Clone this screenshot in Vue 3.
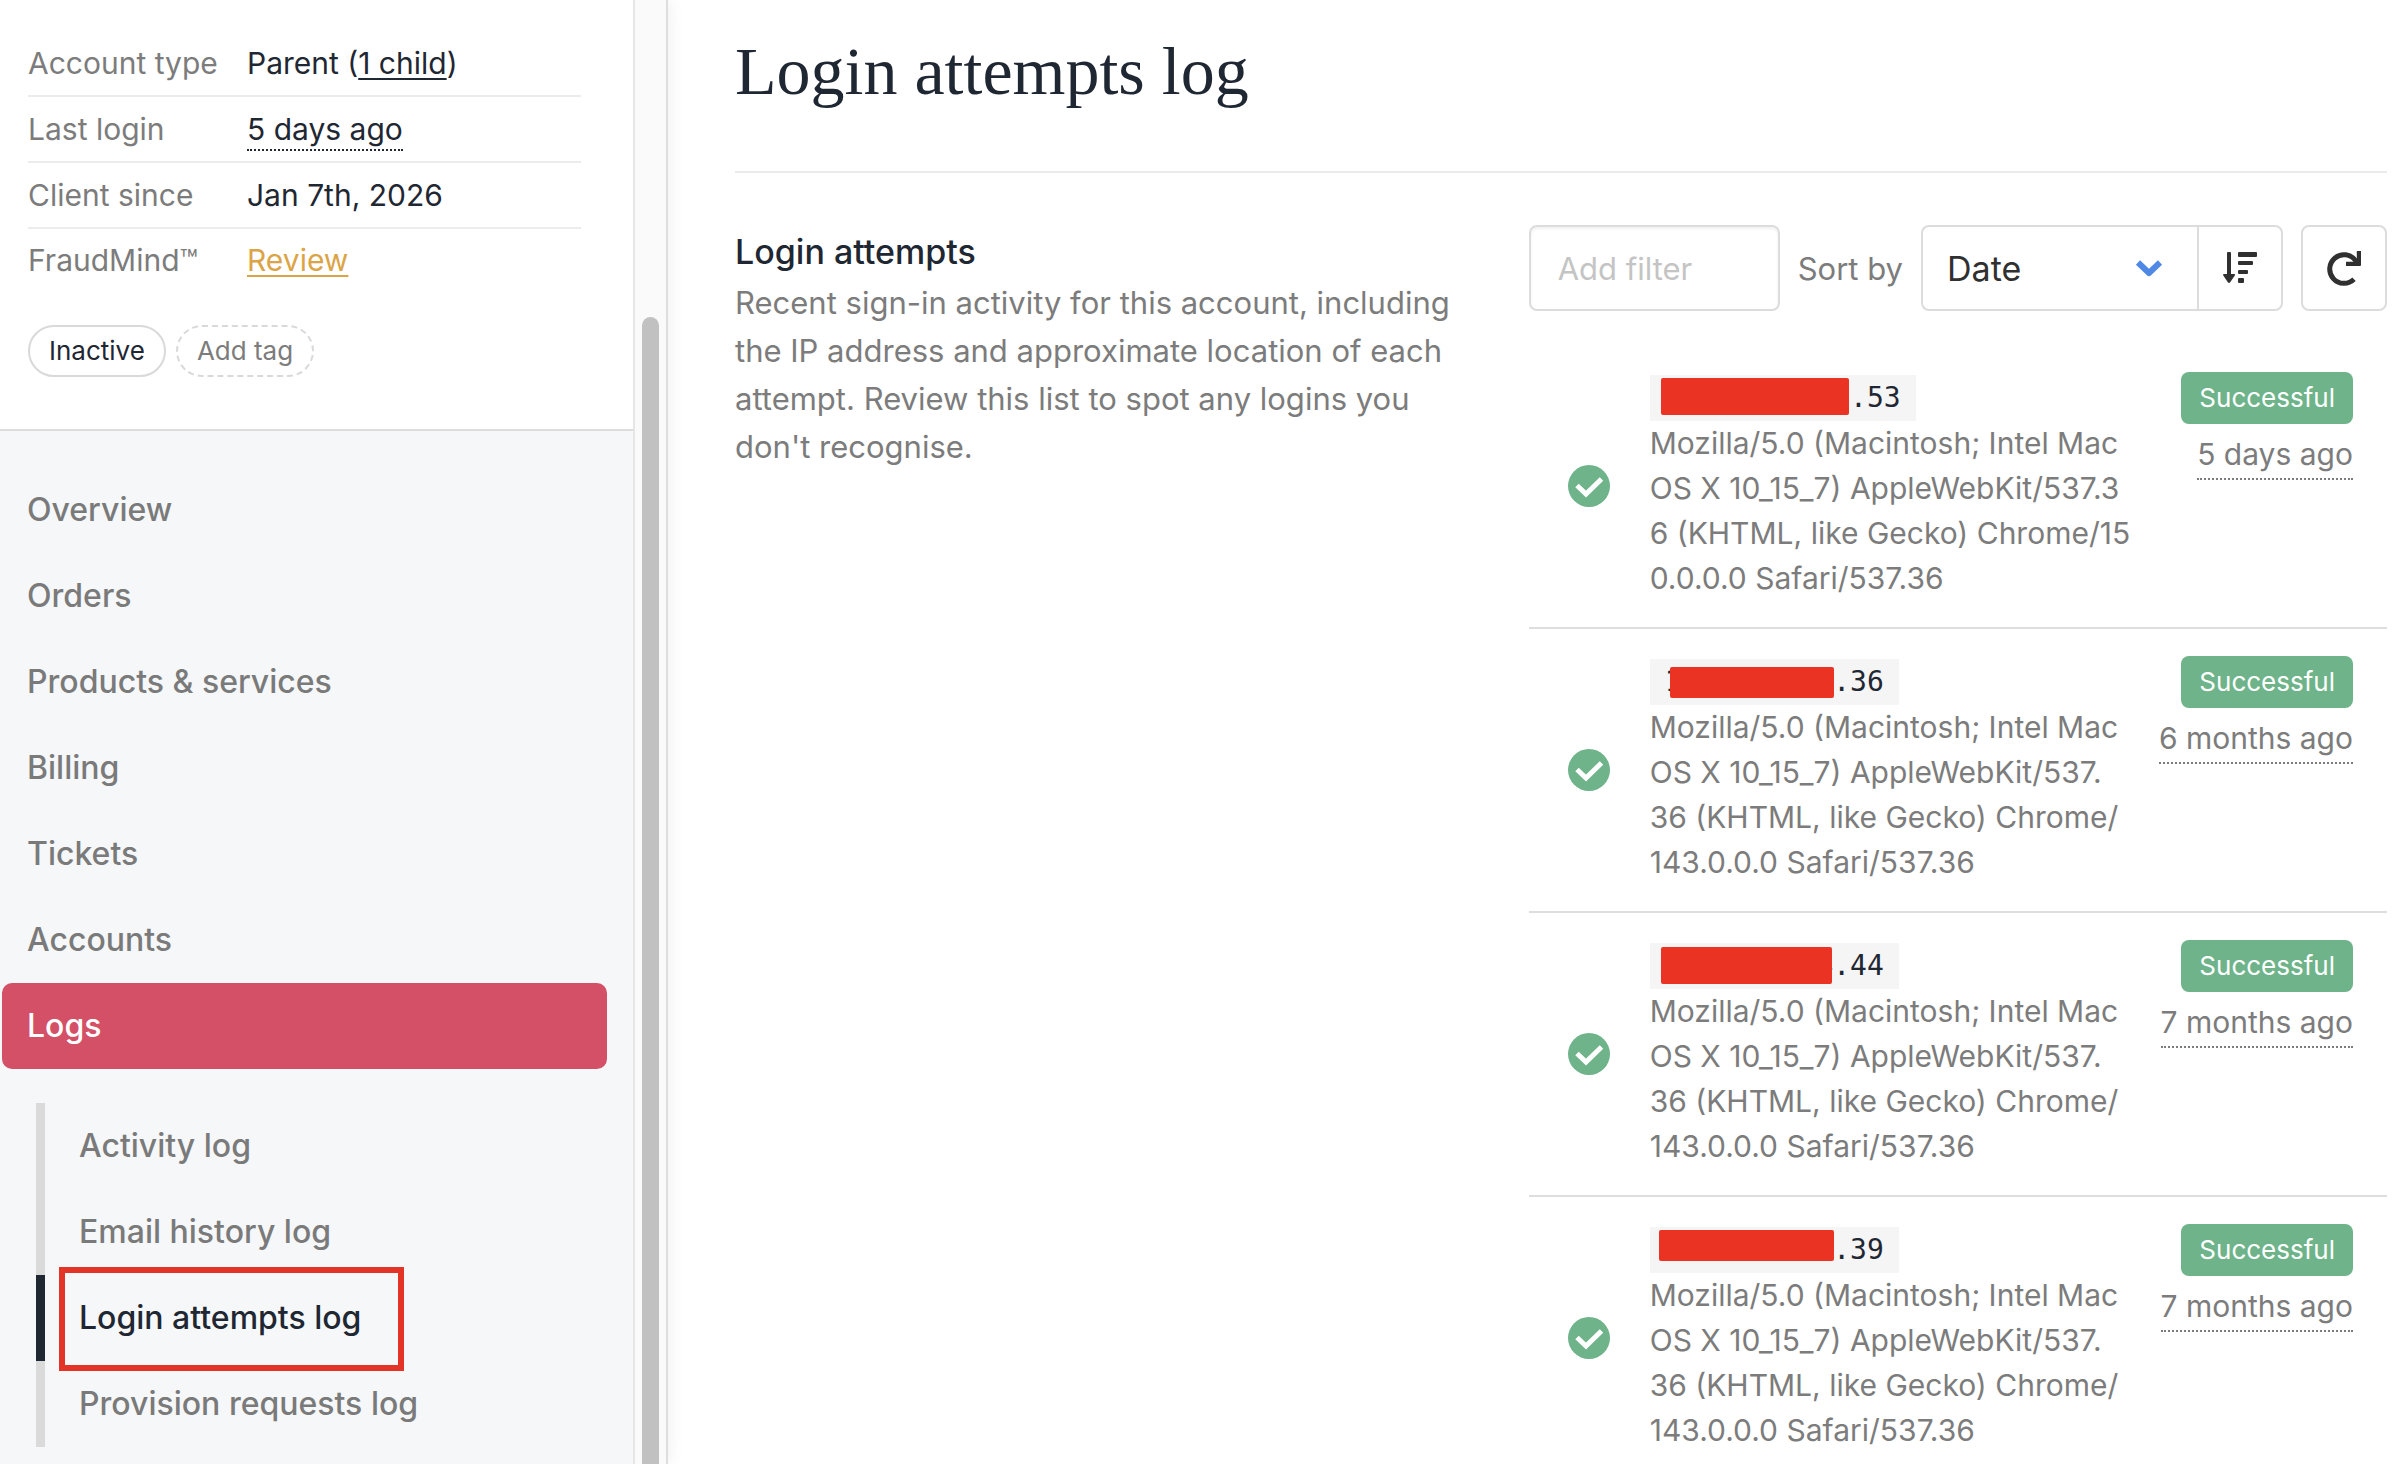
<template>
  <div class="layout">
    <aside class="sidebar">
      <div class="sidebar-content">
        <section class="summary">
          <dl class="details">
            <div class="detail">
              <dt>Account type</dt>
              <dd>Parent (<a href="#children">1 child</a>)</dd>
            </div>
            <div class="detail">
              <dt>Last login</dt>
              <dd><span class="dotted">5 days ago</span></dd>
            </div>
            <div class="detail">
              <dt>Client since</dt>
              <dd>Jan 7th, 2026</dd>
            </div>
            <div class="detail">
              <dt>FraudMind™</dt>
              <dd><a class="warning" href="#fraud">Review</a></dd>
            </div>
          </dl>
          <div class="tags">
            <span class="tag">Inactive</span>
            <button type="button" class="tag tag-add">Add tag</button>
          </div>
        </section>

        <nav class="nav">
          <a
            v-for="item in navItems"
            :key="item"
            href="#"
            class="nav-item"
            :class="{ active: item === 'Logs' }"
          >{{ item }}</a>
          <div class="subnav">
            <a
              v-for="item in logItems"
              :key="item"
              href="#"
              class="subnav-item"
              :class="{ active: item === currentLog }"
            >{{ item }}</a>
          </div>
        </nav>
      </div>
      <div class="scroll-track">
        <div class="scroll-thumb"></div>
      </div>
    </aside>

    <main class="main">
      <h1>Login attempts log</h1>
      <div class="columns">
        <section class="intro">
          <h2>Login attempts</h2>
          <p>
            Recent sign-in activity for this account, including the IP address and approximate
            location of each attempt. Review this list to spot any logins you don't recognise.
          </p>
        </section>

        <section class="log">
          <div class="toolbar">
            <input v-model="filter" class="filter" type="text" placeholder="Add filter" aria-label="Add filter">
            <label for="sort">Sort by</label>
            <div class="sort-group">
              <div class="select-wrap">
                <select id="sort" v-model="sortBy">
                  <option>Date</option>
                  <option>Status</option>
                </select>
                <svg class="chevron" viewBox="0 0 28 18" width="28" height="18">
                  <path d="M3 3.5 14 14 25 3.5" fill="none" stroke="#5088e6" stroke-width="6" stroke-linejoin="round" />
                </svg>
              </div>
              <button type="button" class="icon-button sort-direction" aria-label="Sort direction">
                <svg viewBox="0 0 34 32" width="34" height="32" fill="#303030">
                  <path d="M4 1a1 1 0 0 1 1-1h2a1 1 0 0 1 1 1v21h3.2c.9 0 1.2.8.6 1.4L7 30.5c-.5.6-1.400.6-2 0L.3 23.400C-.2 22.800.1 22 .9 22H4z" />
                  <rect x="15" y="0" width="19" height="5" rx="1" />
                  <rect x="15" y="9" width="15" height="4" rx="1" />
                  <rect x="15" y="18" width="10" height="4" rx="1" />
                  <rect x="15" y="26" width="6" height="5" rx="1" />
                </svg>
              </button>
            </div>
            <button type="button" class="icon-button refresh" aria-label="Refresh">
              <svg viewBox="0 0 34 35" width="34" height="35">
                <path d="M27 28.300A14.300 14.300 0 1 1 28.500 9.500" fill="none" stroke="#303030" stroke-width="5" />
                <path d="M29.800 0H34v14a1 1 0 0 1-1 1H19v-4.300h7.500l3.300-3z" fill="#303030" />
              </svg>
            </button>
          </div>

          <ul class="attempts">
            <li v-for="attempt in attempts" :key="attempt.tail" class="attempt">
              <svg class="status-icon" viewBox="0 0 42 42" width="42" height="42">
                <circle cx="21" cy="21" r="21" fill="#6eb389" />
                <path d="M9 20.500 18 29 33.500 14" fill="none" stroke="#fff" stroke-width="5" />
              </svg>
              <div class="attempt-info">
                <code class="ip" :style="{ width: attempt.chars + 'ch' }">
                  <span>{{ attempt.lead }}</span>
                  <span>{{ attempt.tail }}</span>
                  <i class="redaction" :style="redactionStyle(attempt.mask)"></i>
                </code>
                <p class="agent">{{ attempt.agent.join('\n') }}</p>
              </div>
              <div class="attempt-meta">
                <span class="badge">Successful</span>
                <span class="dotted">{{ attempt.when }}</span>
              </div>
            </li>
          </ul>
        </section>
      </div>
    </main>
  </div>
</template>

<script setup>
import { ref } from 'vue';

const filter = ref('');
const sortBy = ref('Date');
const currentLog = 'Login attempts log';

const navItems = ['Overview', 'Orders', 'Products & services', 'Billing', 'Tickets', 'Accounts', 'Logs'];
const logItems = ['Activity log', 'Email history log', 'Login attempts log', 'Provision requests log'];

const chrome150 = [
  'Mozilla/5.0 (Macintosh; Intel Mac',
  'OS X 10_15_7) AppleWebKit/537.3',
  '6 (KHTML, like Gecko) Chrome/15',
  '0.0.0.0 Safari/537.36',
];
const chrome143 = [
  'Mozilla/5.0 (Macintosh; Intel Mac',
  'OS X 10_15_7) AppleWebKit/537.',
  '36 (KHTML, like Gecko) Chrome/',
  '143.0.0.0 Safari/537.36',
];

// mask: [left, top, width, height] of the block hiding the address
const attempts = [
  { lead: '', tail: '.53', chars: 14, mask: [11, 3, 188, 37], agent: chrome150, when: '5 days ago' },
  { lead: '1', tail: '.36', chars: 13, mask: [20, 8, 164, 31], agent: chrome143, when: '6 months ago' },
  { lead: '', tail: '4.44', chars: 13, mask: [11, 4, 171, 37], agent: chrome143, when: '7 months ago' },
  { lead: '', tail: '.39', chars: 13, mask: [9, 3, 175, 31], agent: chrome143, when: '7 months ago' },
];

const redactionStyle = ([left, top, width, height]) => ({
  left: `${left}px`,
  top: `${top}px`,
  width: `${width}px`,
  height: `${height}px`,
});
</script>

<style>
body {
  margin: 0;
  background: #fff;
}
</style>

<style scoped>
.layout {
  display: flex;
  height: 100vh;
  overflow: hidden;
  font-family: Inter, "Liberation Sans", sans-serif;
  font-size: 30px;
  color: #1f2733;
}
* {
  box-sizing: border-box;
}
a {
  color: inherit;
}

/* Sidebar */
.sidebar {
  display: flex;
  flex: none;
  width: 668px;
  border-right: 2px solid #dedede;
  box-shadow: 0 0 16px rgba(0, 0, 0, 0.08);
}
.sidebar-content {
  flex: 1;
  background: #f5f7f9;
}
.summary {
  padding: 31px 52px 52px 28px;
  background: #fff;
  border-bottom: 2px solid #dcdcdc;
}
.details {
  margin: 0;
}
.detail {
  display: flex;
  align-items: center;
  height: 66px;
  border-bottom: 2px solid #ececec;
}
.detail:last-child {
  height: 62px;
  border-bottom: 0;
}
dt {
  width: 219px;
  color: #7c7c7c;
}
dd {
  margin: 0;
}
dd a {
  text-decoration-thickness: 2px;
  text-underline-offset: 4px;
}
.warning {
  color: #dba447;
}
.dotted {
  padding-bottom: 2px;
  border-bottom: 2px dotted currentColor;
  line-height: 44px;
}
.tags {
  display: flex;
  gap: 10px;
  margin-top: 34px;
}
.tag {
  padding: 0 19px;
  border: 2px solid #d9d9d9;
  border-radius: 26px;
  background: #fff;
  color: #1f2733;
  font: 26px/48px Inter, "Liberation Sans", sans-serif;
}
.tag-add {
  border-style: dashed;
  color: #7c7c7c;
}
.nav {
  padding: 36px 26px 0 2px;
  color: #7a7a7a;
  font-size: 32px;
  font-weight: 500;
  line-height: 86px;
}
.nav-item {
  display: block;
  padding-left: 25px;
  border-radius: 10px;
  text-decoration: none;
}
.nav-item.active {
  background: #d45067;
  color: #fff;
}
.subnav {
  margin: 34px 0 0 34px;
}
.subnav-item {
  display: block;
  position: relative;
  padding-left: 34px;
  border-left: 9px solid #dadada;
  text-decoration: none;
}
.subnav-item.active {
  border-color: #1f2733;
  color: #1f2733;
}
.subnav-item.active::after {
  content: "";
  position: absolute;
  box-sizing: border-box;
  top: -8px;
  left: 14px;
  width: 345px;
  height: 104px;
  border: 6px solid #e33427;
}
.scroll-track {
  display: flex;
  justify-content: center;
  width: 33px;
  padding-top: 317px;
  background: #fafafa;
  border-left: 2px solid #e6e6e6;
}
.scroll-thumb {
  width: 17px;
  border-radius: 9px 9px 0 0;
  background: #c1c1c1;
}

/* Main */
.main {
  flex: 1;
  padding: 0 19px 0 67px;
}
h1 {
  margin: 0 0 52px;
  padding: 31px 0 60px;
  border-bottom: 2px solid #ebebeb;
  font: 400 68px/80px "Liberation Serif", serif;
}
.columns {
  display: grid;
  grid-template-columns: minmax(0, 6fr) minmax(0, 7fr);
  gap: 58px;
}
h2 {
  margin: 0;
  font-size: 34px;
  font-weight: 500;
  line-height: 54px;
}
.intro p {
  margin: 0;
  color: #7c7c7c;
  font-size: 31px;
  line-height: 48px;
}
.toolbar {
  display: flex;
  align-items: center;
  gap: 18px;
  height: 86px;
}
.toolbar label {
  flex: none;
  color: #7c7c7c;
  font-size: 31px;
}
.toolbar input,
.toolbar select,
.icon-button {
  height: 86px;
  margin: 0;
  border: 2px solid #dcdcdc;
  border-radius: 8px;
  background: #fff;
  color: #303030;
  font: 31px Inter, "Liberation Sans", sans-serif;
}
.toolbar .filter {
  flex: 1;
  min-width: 0;
  padding: 0 27px;
  box-shadow: inset 0 2px 3px rgba(0, 0, 0, 0.06);
}
.filter::placeholder {
  color: #c4c4c4;
}
.sort-group {
  display: flex;
}
.select-wrap {
  position: relative;
}
.toolbar select {
  appearance: none;
  width: 276px;
  padding: 0 24px;
  border-right: 0;
  border-radius: 8px 0 0 8px;
  font-size: 34px;
}
.chevron {
  position: absolute;
  top: 34px;
  right: 34px;
  pointer-events: none;
}
.icon-button {
  display: flex;
  flex: none;
  align-items: center;
  justify-content: center;
  width: 86px;
  padding: 0;
}
.sort-direction {
  border-radius: 0 8px 8px 0;
}
.attempts {
  margin: 34px 0 0;
  padding: 0;
  list-style: none;
}
.attempt {
  display: flex;
  padding: 30px 34px 26px 39px;
  border-bottom: 2px solid #dedede;
}
.status-icon {
  align-self: center;
  margin: 0 40px 4px 0;
}
.attempt-info {
  flex: 1;
  color: #7c7c7c;
}
.ip {
  display: flex;
  justify-content: space-between;
  position: relative;
  box-sizing: content-box;
  padding: 0 15px;
  background: #f5f5f5;
  color: #1f2733;
  font: 28px/46px "DejaVu Sans Mono", monospace;
}
.redaction {
  position: absolute;
  border-radius: 2px;
  background: #ea3323;
}
.agent {
  margin: 0;
  line-height: 45px;
  white-space: pre-line;
}
.attempt-meta {
  display: flex;
  flex-direction: column;
  align-items: flex-end;
  gap: 8px;
  margin-top: -3px;
  color: #7c7c7c;
}
.badge {
  padding: 0 18px;
  border-radius: 8px;
  background: #6eb389;
  color: #fff;
  font-size: 26px;
  line-height: 52px;
}
</style>
